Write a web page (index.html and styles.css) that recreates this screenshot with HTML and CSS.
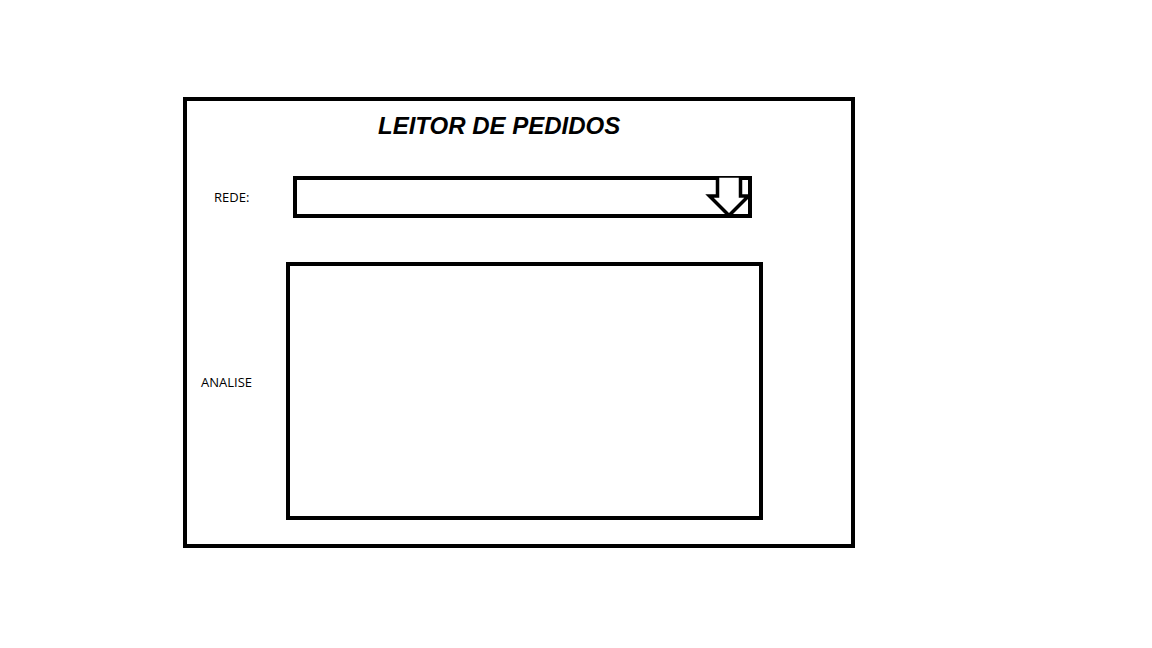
FILE: index.html
```html
<!DOCTYPE html>
<html lang="pt">
<head>
<meta charset="utf-8">
<title>Leitor de Pedidos</title>
<link rel="stylesheet" href="styles.css">
</head>
<body>
<div class="frame">
  <h1 class="title">LEITOR DE PEDIDOS</h1>
  <div class="row row-rede">
    <label class="label label-rede">REDE:</label>
    <div class="select">
      <svg class="arrow" width="50" height="42" viewBox="0 0 50 42" aria-hidden="true">
        <polygon points="15.5,0 38.5,0 38.5,20 46.5,20 27,39.5 7.5,20 15.5,20" fill="#fff" stroke="#000" stroke-width="3.5" stroke-linejoin="miter"/>
      </svg>
    </div>
  </div>
  <div class="row row-analise">
    <label class="label label-analise">ANALISE</label>
    <div class="textarea"></div>
  </div>
</div>
</body>
</html>
```
FILE: styles.css
```css
html, body {
  margin: 0;
  padding: 0;
  background: #fff;
}

body {
  padding: 97px 0 0 183px;
  font-family: "Open Sans", "Liberation Sans", sans-serif;
}

.frame {
  box-sizing: border-box;
  width: 672px;
  height: 451px;
  border: 4px solid #000;
  padding-top: 11px;
}

.title {
  margin: 0;
  padding-left: 191px;
  font-family: "Liberation Sans", Arial, sans-serif;
  font-size: 24px;
  font-weight: bold;
  font-style: italic;
  line-height: 28px;
  color: #000;
}

.row {
  display: flex;
}

.row-rede {
  margin-top: 36px;
  padding-left: 27px;
  align-items: center;
}

.row-analise {
  margin-top: 44px;
  padding-left: 14px;
  align-items: flex-start;
}

.label {
  font-size: 13px;
  line-height: 18px;
  color: #000;
}

.label-rede {
  width: 79px;
}

.label-analise {
  width: 85px;
  margin-top: 111px;
}

.select {
  position: relative;
  box-sizing: border-box;
  width: 459px;
  height: 42px;
  border: 4px solid #000;
}

.arrow {
  position: absolute;
  top: -4px;
  right: -4px;
}

.textarea {
  box-sizing: border-box;
  width: 477px;
  height: 258px;
  border: 4px solid #000;
}
```
